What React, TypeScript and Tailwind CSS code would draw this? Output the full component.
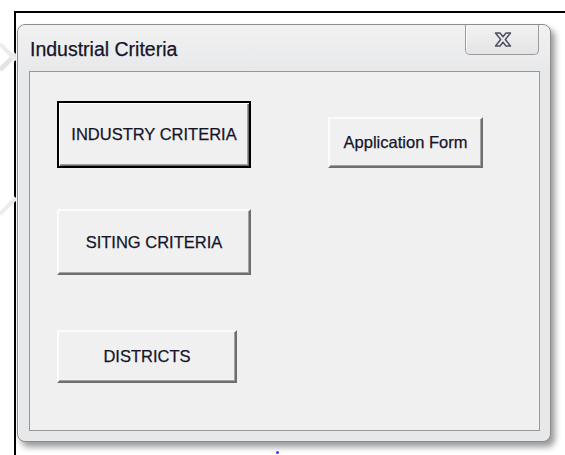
import type { ReactNode } from 'react';

const font = { fontFamily: '"Liberation Sans", Arial, sans-serif' };

function CloseGlyph() {
  return (
    <svg width="18" height="15" viewBox="0 0 18 15">
      <polygon
        points="1.5,1 6,1 9,4.8 12,1 16.5,1 11.3,7.5 16.5,14 12,14 9,10.2 6,14 1.5,14 6.7,7.5"
        fill="#ececf2"
        stroke="#4d4f62"
        strokeWidth="1.5"
        strokeLinejoin="round"
      />
    </svg>
  );
}

function Button({ children, def, className }: { children: ReactNode; def?: boolean; className: string }) {
  return (
    <button
      className={
        'flex items-center justify-center bg-[#f0f0f0] text-[16.5px] text-[#15152a] [-webkit-text-stroke:0.25px_#15152a] ' +
        (def
          ? 'border-2 border-black shadow-[inset_1px_1px_0_#ffffff,inset_-1px_-1px_0_#6a6a6a,inset_-2px_-2px_0_#a0a0a0] '
          : 'border-2 border-t-[#fbfbfb] border-l-[#fbfbfb] border-r-[#6e6e6e] border-b-[#6e6e6e] shadow-[inset_-1px_-1px_0_#a3a3a3] ') +
        className
      }
    >
      {children}
    </button>
  );
}

export default function App() {
  return (
    <div className="relative h-[455px] w-[565px] overflow-hidden bg-white" style={font}>
      {/* faint watermark strokes in the margin */}
      <svg className="pointer-events-none absolute left-0 top-0" width="16" height="260" viewBox="0 0 16 260">
        <path d="M0 70 L16 54" stroke="#e4e4e4" strokeWidth="5" />
        <path d="M0 44 L16 60" stroke="#ececec" strokeWidth="4" />
        <path d="M0 214 L16 198" stroke="#ececec" strokeWidth="4" />
      </svg>

      <div className="ml-[14px] mt-[11px] h-[444px] border-l-2 border-t-2 border-black pl-px pt-[11px]">
        <div className="flex h-[418px] w-[534px] flex-col rounded-[8px] border border-[#8c8c8c] bg-[#e6e8ea] shadow-[inset_1px_1px_0_#f7f7f7,4px_5px_6px_rgba(0,0,0,0.4)]">
          <div className="flex h-[46px] items-start justify-between rounded-t-[8px] bg-gradient-to-b from-[#f1f1f1] to-[#e8e9eb] pl-[12px] pr-[11px]">
            <span className="mt-[13px] text-[19.5px] leading-[22px] text-[#15152a] [-webkit-text-stroke:0.25px_#15152a]">
              Industrial Criteria
            </span>
            <div className="flex h-[30px] w-[74px] items-center justify-center rounded-b-[5px] border border-t-0 border-[#9a9a9a] bg-gradient-to-b from-[#f2f2f2] to-[#e4e4e4] pl-[2px] shadow-[inset_1px_0_0_#fbfbfb]">
              <CloseGlyph />
            </div>
          </div>

          <div className="mx-[11px] mr-[10px] flex h-[360px] w-[511px] border border-[#979797] bg-[#f0f0f0] pl-[27px] pt-[29px]">
            <div className="flex w-[194px] flex-col items-start">
              <Button def className="h-[67px] w-[194px]">INDUSTRY CRITERIA</Button>
              <Button className="mt-[41px] h-[66px] w-[194px]">SITING CRITERIA</Button>
              <Button className="mt-[55px] h-[53px] w-[180px]">DISTRICTS</Button>
            </div>
            <div className="ml-[77px] pt-[16px]">
              <Button className="h-[51px] w-[155px]">Application Form</Button>
            </div>
          </div>
        </div>
      </div>

      <div className="absolute left-[276px] top-[451px] h-[3px] w-[3px] rounded-full bg-[#3a3af0]" />
    </div>
  );
}
